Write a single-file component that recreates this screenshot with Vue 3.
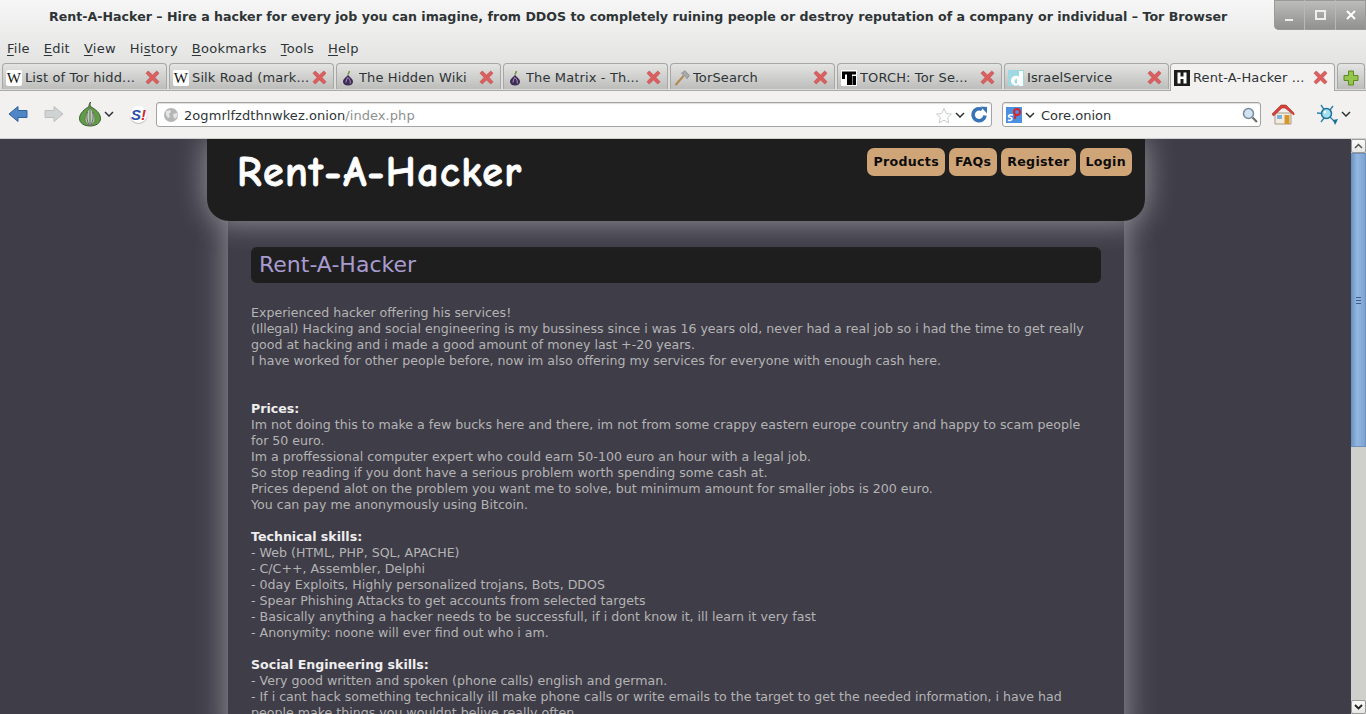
<script setup>
const menus = [
  { k: 'F', r: 'ile' }, { k: 'E', r: 'dit' }, { k: 'V', r: 'iew' },
  { p: 'Hi', k: 's', r: 'tory' }, { k: 'B', r: 'ookmarks' }, { k: 'T', r: 'ools' }, { k: 'H', r: 'elp' }
]
const tabs = [
  { t: 'List of Tor hidd...', i: 'w' }, { t: 'Silk Road (mark...', i: 'w' },
  { t: 'The Hidden Wiki', i: 'onion' }, { t: 'The Matrix - Th...', i: 'onion' },
  { t: 'TorSearch', i: 'hammer' }, { t: 'TORCH: Tor Se...', i: 'torch' },
  { t: 'IsraelService', i: 'd' }, { t: 'Rent-A-Hacker ...', i: 'h', active: true }
]
const navs = ['Products', 'FAQs', 'Register', 'Login']
</script>

<template>
  <div class="win">
    <header class="chrome">
      <div class="titlebar">
        <div class="title">Rent-A-Hacker – Hire a hacker for every job you can imagine, from DDOS to completely ruining people or destroy reputation of a company or individual – Tor Browser</div>
        <div class="wm">
          <span class="wmb"><i class="min"></i></span>
          <span class="wmb"><i class="max"></i></span>
          <span class="wmb">
            <svg width="12" height="12" viewBox="0 0 12 12"><path d="M2 2l8 8M10 2l-8 8" stroke="#fff" stroke-width="2"/></svg>
          </span>
        </div>
      </div>
      <nav class="menubar">
        <span v-for="m in menus" :key="m.r" class="menu">{{ m.p }}<u>{{ m.k }}</u>{{ m.r }}</span>
      </nav>
      <div class="tabstrip">
        <div v-for="t in tabs" :key="t.t" class="tab" :class="{ active: t.active }">
          <span v-if="t.i === 'w'" class="fav wiki">W</span>
          <svg v-else-if="t.i === 'onion'" class="fav" viewBox="0 0 16 16"><path d="M9.500 1C9 2.500 8.500 3.500 8 4.500" stroke="#6a9a3a" stroke-width="1.500" fill="none"/><path d="M8 4.500C9 7 13 8.500 13 11.500 13 14 11 15.500 8 15.500S3 14 3 11.500C3 8.500 7 7 8 4.500z" fill="#3d2a55"/><path d="M8 7C7 9 6 10.500 6 12.500M8.500 8C10 10 10.500 11 10.200 13.500" stroke="#c9b9dc" stroke-width=".8" fill="none"/></svg>
          <svg v-else-if="t.i === 'hammer'" class="fav" viewBox="0 0 16 16"><path d="M1.500 15L9.500 6" stroke="#b08a50" stroke-width="2"/><path d="M7.500 3L11 0.800 15.500 5.500 13 8.800 11.500 6.500 9.500 5.500z" fill="#a8a8a8" stroke="#777" stroke-width=".5"/></svg>
          <span v-else-if="t.i === 'torch'" class="fav torch">
            <svg viewBox="0 0 16 16" width="16" height="16"><path d="M0 0h16v16H0z" fill="#fff"/><path d="M1 1.500h14v3H11V15H6V4.500H4V9H1z" fill="#000"/><path d="M11.500 6H15v9h-3.500z" fill="#000"/></svg>
          </span>
          <svg v-else-if="t.i === 'd'" class="fav" viewBox="0 0 16 16"><path d="M0 0h16v16H0z" fill="#9ed8e0"/><path d="M11 1h4v15h-4v-1.500C8 17 3 15 3 10.500 3 6.500 8 4.500 11 6.500z M9 9c-2 0-2.500 1-2.500 2.500S8 14 9 13.500z" fill="#fff" fill-rule="evenodd"/></svg>
          <svg v-else class="fav" viewBox="0 0 16 16"><path d="M0 0h16v16H0z" fill="#1c1c1c"/><path d="M3.500 2.500h3v4h3v-4h3v11h-3v-4.500h-3v4.500h-3z" fill="#fff"/></svg>
          <span class="tabtext">{{ t.t }}</span>
          <svg class="closex" viewBox="0 0 15 15"><path d="M3.200 1L7.500 5 11.800 1 14 3.200 10 7.500 14 11.800 11.800 14 7.500 10 3.200 14 1 11.800 5 7.500 1 3.200z" fill="#dc5e5e" stroke="#b84a4a" stroke-width=".6"/></svg>
        </div>
        <div class="newtab">
          <svg width="16" height="16" viewBox="0 0 16 16"><path d="M5.500 1h5v4.500H15v5h-4.500V15h-5v-4.500H1v-5h4.500z" fill="#93c64a" stroke="#5c8a22"/></svg>
        </div>
      </div>
      <div class="navbar">
        <svg class="back" width="20" height="20" viewBox="0 0 20 20"><path d="M1 10L10 2.500V6.500H19V13.500H10V17.500z" fill="#4f86c6" stroke="#2f62a0"/></svg>
        <svg class="fwd" width="20" height="20" viewBox="0 0 20 20"><path d="M19 10L10 2.500V6.500H1V13.500H10V17.500z" fill="#d0d3d3" stroke="#bcbfbf"/></svg>
        <svg class="tor" width="24" height="26" viewBox="0 0 24 26"><path d="M12.500 1C12 3 12 4 12.500 5.500 17 8 22.500 12 22.500 17.500 22.500 22 18 25 12 25S1.500 22 1.500 17.500C1.500 12 7 8 11 5.500 11 4 11 3 12.500 1z" fill="#5f9c45" stroke="#3a5e30"/><path d="M12 6C9 11 7 14 7 18c0 3 2 5.500 5 6.500 3-1 5-3.500 5-6.500 0-4-2-7-5-12z" fill="#b6d3a0" stroke="#557a48" stroke-width=".8"/><path d="M12 7v17M9.500 11C8.500 14 8.500 19 11 24M14.500 11c1 3 1 8-1.500 13" stroke="#6a5a80" stroke-width="1" fill="none"/></svg>
        <svg class="chev torch-chev" width="10" height="6" viewBox="0 0 10 6"><path d="M1 1l4 4 4-4" fill="none" stroke="#2e3436" stroke-width="1.500"/></svg>
        <span class="sbadge"><b>S</b><em>!</em></span>
        <div class="urlbar">
          <svg class="globe" width="16" height="16" viewBox="0 0 16 16"><circle cx="8" cy="8" r="7" fill="#b4b6b6"/><path d="M3 4l4-1 1 2-2 2 1 3-2 1-2-3zM10 7l4-1 .5 3-2.500 3-1.500-2z" fill="#e4e5e5"/></svg>
          <span class="host">2ogmrlfzdthnwkez.onion</span><span class="path">/index.php</span>
          <svg class="star" width="18" height="17" viewBox="0 0 18 17"><path d="M9 1.500l2.300 5 5.200.6-3.900 3.500 1.100 5.200L9 13.200 4.300 15.800l1.100-5.200-3.900-3.500 5.200-.6z" fill="#fff" stroke="#c9cbcb"/></svg>
          <svg class="chev" width="10" height="6" viewBox="0 0 10 6"><path d="M1 1l4 4 4-4" fill="none" stroke="#2e3436" stroke-width="1.500"/></svg>
          <svg class="reload" width="18" height="18" viewBox="0 0 18 18"><path d="M15 9.500a6 6 0 1 1-3-6" fill="none" stroke="#3a74b8" stroke-width="3.600"/><path d="M10.500 .5L17 1v6.500z" fill="#3a74b8"/></svg>
        </div>
        <div class="searchbar">
          <span class="engine">
            <svg width="16" height="16" viewBox="0 0 16 16"><path d="M0 0h16v16H0z" fill="#4a8fe0"/><path d="M2 13c2 1 4 0 4-1.500S2 10.500 2.500 9 6 7.500 7 8" fill="none" stroke="#fff" stroke-width="1.500"/><circle cx="11" cy="5" r="3" fill="none" stroke="#d8232a" stroke-width="2"/><path d="M10 8l-1.500 4" stroke="#d8232a" stroke-width="2"/></svg>
          </span>
          <svg class="chev" width="10" height="6" viewBox="0 0 10 6"><path d="M1 1l4 4 4-4" fill="none" stroke="#2e3436" stroke-width="1.500"/></svg>
          <span class="query">Core.onion</span>
          <svg class="glass" width="16" height="16" viewBox="0 0 16 16"><circle cx="6.500" cy="6.500" r="5" fill="#cfe3f4" stroke="#7b8a99" stroke-width="1.500"/><path d="M10.500 10.500l4.500 4.500" stroke="#6f6f6f" stroke-width="2.200"/></svg>
        </div>
        <svg class="home" width="24" height="22" viewBox="0 0 24 22"><path d="M4 10h16v11H4z" fill="#f2ece0" stroke="#a89a80"/><path d="M1 11L10 2h5l8 8v2L14 5h-3L2.500 13z" fill="#d8413a" stroke="#a82a25" stroke-width=".6"/><path d="M13.500 12h5v9h-5z" fill="#d6962c"/><path d="M6 12h5v4H6z" fill="#7fb0dc"/></svg>
        <svg class="net" width="24" height="24" viewBox="0 0 24 24"><path d="M12 12L6 3M12 12L2 11M12 12l-6 8M12 12l6-8M12 12l9 9" stroke="#2d83a8" stroke-width="1.400"/><path d="M20 23l3-6-5 1z" fill="#1d6f95"/><circle cx="11.500" cy="11.500" r="5" fill="#a3e0f0" stroke="#1d6f95" stroke-width="1.500"/><circle cx="10" cy="10" r="1.200" fill="#fff"/></svg>
        <svg class="chev" width="10" height="6" viewBox="0 0 10 6"><path d="M1 1l4 4 4-4" fill="none" stroke="#2e3436" stroke-width="1.500"/></svg>
      </div>
    </header>

    <div class="viewport">
      <main class="page">
        <div class="wrap">
          <section class="site-head">
            <h1>Rent-A-Hacker</h1>
            <div class="site-nav">
              <a v-for="n in navs" :key="n">{{ n }}</a>
            </div>
          </section>
          <section class="content">
            <h2>Rent-A-Hacker</h2>
            <p>
              Experienced hacker offering his services!<br>
              (Illegal) Hacking and social engineering is my bussiness since i was 16 years old, never had a real job so i had the time to get really good at hacking and i made a good amount of money last +-20 years.<br>
              I have worked for other people before, now im also offering my services for everyone with enough cash here.<br>
              <br><br>
              <b>Prices:</b><br>
              Im not doing this to make a few bucks here and there, im not from some crappy eastern europe country and happy to scam people for 50 euro.<br>
              Im a proffessional computer expert who could earn 50-100 euro an hour with a legal job.<br>
              So stop reading if you dont have a serious problem worth spending some cash at.<br>
              Prices depend alot on the problem you want me to solve, but minimum amount for smaller jobs is 200 euro.<br>
              You can pay me anonymously using Bitcoin.<br>
              <br>
              <b>Technical skills:</b><br>
              - Web (HTML, PHP, SQL, APACHE)<br>
              - C/C++, Assembler, Delphi<br>
              - 0day Exploits, Highly personalized trojans, Bots, DDOS<br>
              - Spear Phishing Attacks to get accounts from selected targets<br>
              - Basically anything a hacker needs to be successfull, if i dont know it, ill learn it very fast<br>
              - Anonymity: noone will ever find out who i am.<br>
              <br>
              <b>Social Engineering skills:</b><br>
              - Very good written and spoken (phone calls) english and german.<br>
              - If i cant hack something technically ill make phone calls or write emails to the target to get the needed information, i have had people make things you wouldnt belive really often.
            </p>
          </section>
        </div>
      </main>
      <aside class="scrollbar">
        <span class="sbtn"><svg width="9" height="6" viewBox="0 0 9 6"><path d="M1 5l3.500-3.500L8 5" fill="none" stroke="#555" stroke-width="1.500"/></svg></span>
        <div class="thumb"><i></i><i></i><i></i></div>
        <div class="track"></div>
        <span class="sbtn"><svg width="9" height="6" viewBox="0 0 9 6"><path d="M1 1l3.500 3.500L8 1" fill="none" stroke="#222" stroke-width="1.800"/></svg></span>
      </aside>
      <svg class="cursor" width="14" height="20" viewBox="0 0 14 20"><path d="M1 1v15l3.500-3.200 2.500 6 2.500-1-2.500-5.800h5z" fill="#111" stroke="#fff"/></svg>
    </div>
  </div>
</template>

<style>
html, body { margin: 0; overflow: hidden; }
</style>

<style scoped>
.win { width: 1366px; height: 714px; display: flex; flex-direction: column; overflow: hidden; font-family: "DejaVu Sans", sans-serif; color: #2e3436; }
.chrome { height: 139px; flex: none; background: linear-gradient(#f6f6f6, #e4e4e3 62px, #dcdcdb 90px); display: flex; flex-direction: column; }
.titlebar { height: 36px; flex: none; display: flex; justify-content: space-between; }
.title { font: bold 12.6px/33px "DejaVu Sans", sans-serif; padding-left: 49px; white-space: nowrap; color: #2e3436; letter-spacing: .017px; }
.wm { width: 92px; height: 30px; display: flex; background: linear-gradient(#bdbdbb, #8f8f8d); border-radius: 0 0 0 5px; box-shadow: inset 0 0 0 1px #9a9a98; }
.wmb { flex: 1; display: flex; align-items: center; justify-content: center; border-right: 1px solid #b8b8b6; padding-bottom: 1px; }
.wmb:last-child { border-right: 0; }
.wmb .min { width: 8px; height: 2px; background: #eee; margin-top: 10px; }
.wmb .max { width: 7px; height: 6px; border: 2px solid #eee; }
.menubar { height: 26px; flex: none; display: flex; gap: 14px; padding-left: 7px; font-size: 13px; line-height: 25px; letter-spacing: .25px; }
.menu u { text-underline-offset: 2px; }
.tabstrip { height: 28px; flex: none; display: flex; gap: 2px; padding-left: 2px; border-bottom: 1px solid #a9a9a7; }
.tab { width: 165px; height: 26px; margin-top: 1px; display: flex; align-items: center; gap: 3px; box-sizing: border-box; padding: 2px 6px 0 3px; border: 1px solid #a7a7a5; border-bottom: 0; border-radius: 4px 4px 0 0; background: linear-gradient(#e4e4e3, #bdbdbb); font-size: 13px; letter-spacing: .13px; }
.tab.active { background: #f2f1f0; height: 28px; margin-bottom: -1px; margin-left: -1px; padding-bottom: 2px; position: relative; }
.newtab { width: 28px; height: 26px; margin-top: 1px; box-sizing: border-box; border: 1px solid #a7a7a5; border-bottom: 0; border-radius: 4px 4px 0 0; background: linear-gradient(#e4e4e3, #bdbdbb); display: flex; align-items: center; justify-content: center; padding-top: 2px; }
.fav { width: 16px; height: 16px; flex: none; }
.wiki { background: #fff; border-radius: 2px; font: 15px/16px "Liberation Serif", serif; text-align: center; color: #111; }
.torch { display: block; }
.tabtext { flex: 1; white-space: nowrap; overflow: hidden; }
.closex { width: 15px; height: 15px; flex: none; }
.navbar { flex: 1; display: flex; align-items: center; background: #f2f1f0; border-bottom: 1px solid #d0d0ce; padding-left: 8px; box-sizing: border-box; padding-bottom: 1px; }
.fwd { margin-left: 16px; }
.tor { margin-left: 14px; }
.torch-chev { margin-left: 3px; }
.sbadge { width: 17px; height: 17px; margin-left: 16px; border-radius: 50%; background: #fff; font: bold italic 15px/17px "Liberation Sans", sans-serif; display: flex; justify-content: center; box-shadow: 0 1px 1px #bbb; }
.sbadge b { color: #2b4fa5; }
.sbadge em { color: #d8232a; }
.urlbar, .searchbar { height: 25px; display: flex; align-items: center; box-sizing: border-box; background: #fff; border: 1px solid #a3a3a1; border-radius: 3px; box-shadow: inset 0 1px 1px #ddd; padding-top: 2px; }
.urlbar { width: 836px; margin-left: 9px; padding-left: 6px; padding-right: 3px; font-size: 13px; letter-spacing: .06px; }
.globe { margin-right: 5px; }
.host { color: #2e3436; }
.path { color: #8e9190; flex: 1; }
.star { margin-right: 2px; }
.reload { margin-left: 5px; }
.searchbar { width: 259px; margin-left: 10px; padding-left: 3px; padding-right: 2px; font-size: 13px; }
.searchbar .chev { margin-left: 3px; }
.query { flex: 1; margin-left: 6px; }
.engine { height: 16px; }
.home { margin-left: 10px; }
.net { margin-left: 20px; }
.navbar > .chev { margin-left: 2px; }
.viewport { flex: 1; min-height: 0; display: flex; position: relative; }
.page { flex: 1; min-width: 0; background: #3f3d48; overflow: hidden; }
.wrap { width: 938px; margin-left: 207px; display: flex; flex-direction: column; align-items: center; }
.site-head { width: 938px; height: 82px; flex: none; box-sizing: border-box; background: #1e1e1e; border-radius: 0 0 22px 22px; box-shadow: 0 0 30px rgba(255,255,255,.48); position: relative; z-index: 2; display: flex; justify-content: space-between; padding: 9px 13px 0 30px; }
h1 { margin: 0; font: bold 42px/50px "Comic Sans MS", "Comic Neue", cursive; letter-spacing: 1.4px; -webkit-text-stroke: .8px #fff; color: #fff; }
.site-nav { display: flex; gap: 4px; height: 28px; margin-top: 0; }
.site-nav a { padding: 0 6px; font: bold 12.6px/27px "DejaVu Sans", sans-serif; letter-spacing: .3px; color: #0c0c0c; background: #cfa578; border-radius: 7px; }
.content { width: 896px; flex: none; box-sizing: border-box; padding: 26px 23px 20px; background: #3f3d48; box-shadow: 0 0 30px rgba(255,255,255,.48); position: relative; z-index: 1; }
h2 { margin: 0 0 22px; height: 36px; padding-left: 8px; font: 22px/35px "DejaVu Sans", sans-serif; color: #a89bd0; background: #1e1e1e; border-radius: 6px; }
p { margin: 0; font: 12.6px/16px "DejaVu Sans", sans-serif; color: #b4b4b4; }
p b { color: #eee; }
.scrollbar { width: 15px; flex: none; display: flex; flex-direction: column; background: #cfcfcb; }
.sbtn { height: 14px; flex: none; display: flex; align-items: center; justify-content: center; background: linear-gradient(#fafafa, #e6e6e4); border: 1px solid #9a9a98; box-sizing: border-box; border-radius: 2px; }
.thumb { height: 294px; flex: none; display: flex; flex-direction: column; align-items: center; justify-content: center; gap: 2px; background: linear-gradient(90deg, #6f98c8, #93b7e0 40%, #7aa3d3); border: 1px solid #6f90ba; box-sizing: border-box; }
.thumb i { width: 5px; height: 1px; background: #3d5f8a; }
.track { flex: 1; }
.cursor { position: absolute; left: 564px; top: 132px; }
</style>
